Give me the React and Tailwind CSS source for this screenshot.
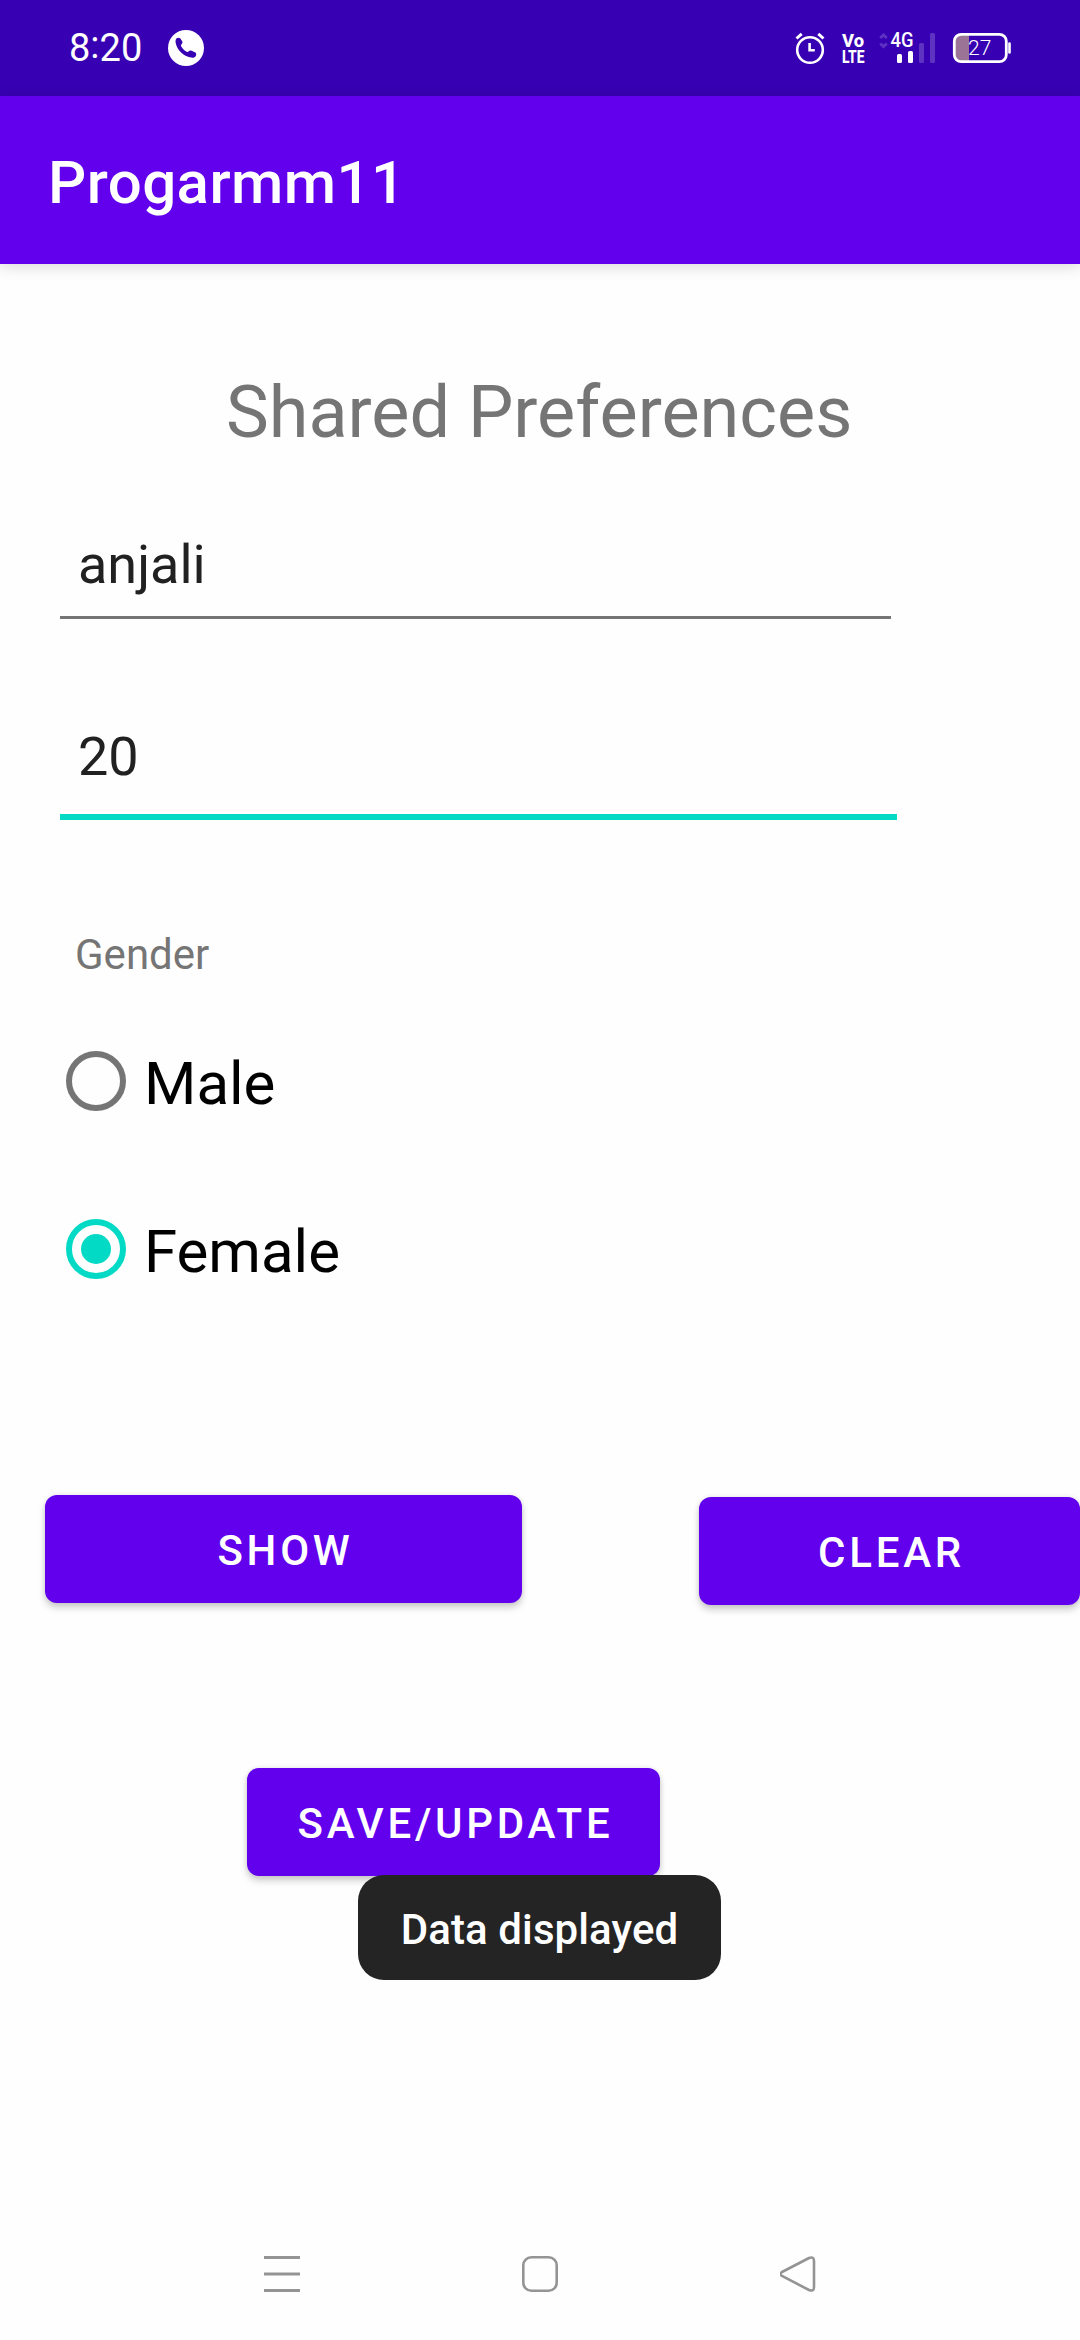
function StatusIcons() {
  return (
    <svg className="h-[96px] w-[240px]" viewBox="780 0 240 96" fill="none">
      {/* alarm clock */}
      <g stroke="#fff">
        <circle cx="810" cy="50" r="12.8" strokeWidth="2.6" />
        <path d="M796.5 38.5l5.2-4.6M823.5 38.5l-5.2-4.6" strokeWidth="3" />
        <path d="M809.6 43v7.3h5.2" strokeWidth="2.6" />
      </g>
      {/* VoLTE */}
      <g fill="#fff" fontFamily="Roboto, sans-serif" fontWeight="800">
        <text x="842" y="46.8" fontSize="18" textLength="22" lengthAdjust="spacingAndGlyphs">Vo</text>
        <text x="842" y="62.5" fontSize="18.5" textLength="22.5" lengthAdjust="spacingAndGlyphs">LTE</text>
      </g>
      {/* data arrows */}
      <path d="M880.2 38l3.300-3 3.300 3M880.200 43.500l3.300 3 3.300-3" stroke="#5f33c2" strokeWidth="2.8" />
      <text x="890.5" y="47" fontSize="19.5" fontWeight="500" fontFamily="Roboto, sans-serif" fill="#fff" textLength="23" lengthAdjust="spacingAndGlyphs">4G</text>
      {/* signal bars */}
      <rect x="897" y="54" width="5" height="9" rx="1.5" fill="#fff" />
      <rect x="908" y="51" width="5" height="12" rx="1.5" fill="#fff" />
      <rect x="919" y="43" width="5" height="20" rx="1.5" fill="#5f33c2" />
      <rect x="930" y="33" width="5" height="30" rx="1.5" fill="#5f33c2" />
      {/* battery */}
      <path d="M969 35h-7a7 7 0 0 0-7 7v12a7 7 0 0 0 7 7h7z" fill="#9b7396" />
      <rect x="954.3" y="34.3" width="52" height="27.4" rx="7" stroke="#fff" strokeWidth="2.8" />
      <path d="M1009.5 43.5v9" stroke="#fff" strokeWidth="2.6" strokeLinecap="round" />
      <text x="968" y="55" fontSize="21" fontFamily="Roboto, sans-serif" fontWeight="350" fill="#fff">27</text>
    </svg>
  );
}

function StatusBar() {
  return (
    <header className="flex h-[96px] items-center bg-[#3700b3] pl-[69px] text-white">
      <span className="w-[99px] text-[38px] leading-[96px]">
        8<span className="relative -top-[3px]">:</span>20
      </span>
      <svg className="h-9 w-9" viewBox="0 0 36 36">
        <circle cx="18" cy="18" r="18" fill="#fff" />
        <path
          d="M8.700 8.300c1-.8 2.900-.9 3.700.2l1.900 3c.5 1-.1 2.100-.9 3-.6.700-.6 1.300-.1 2 1.300 2.200 3 3.900 5.300 5.200.7.400 1.300.3 1.900-.2 1-.9 2-1.100 3-.7l3.400 1.400c1.400.6 1.700 2 .9 3.700-.7 1.500-2.600 2.200-5 1.700C15.400 26 9.300 20.700 7.700 13c-.4-2-.1-3.800 1-4.700z"
          fill="#3700b3"
        />
      </svg>
      <div className="ml-auto flex pr-[60px]">
        <StatusIcons />
      </div>
    </header>
  );
}

function Radio({ label, checked }) {
  return (
    <label className="flex h-[96px] items-center">
      <span
        className={
          checked
            ? "flex size-[60px] items-center justify-center rounded-full border-[6px] border-[#03dac5]"
            : "size-[60px] rounded-full border-[6px] border-[#757575]"
        }
      >
        {checked && <span className="size-[30px] rounded-full bg-[#03dac5]" />}
      </span>
      <span className="pt-[5px] pl-[18px] text-[60px] leading-[70px] text-black">{label}</span>
    </label>
  );
}

function Button({ className, children }) {
  return (
    <button
      className={
        "flex h-[108px] items-center justify-center rounded-[12px] bg-[#6200ee] pt-[3px] pl-[4px] text-[42px] font-medium tracking-[3.75px] text-white shadow-[0_5px_7px_rgba(0,0,0,0.18),0_0_5px_rgba(0,0,0,0.1)] " +
        className
      }
    >
      {children}
    </button>
  );
}

export default function App() {
  return (
    <div className="relative flex h-[2340px] w-[1080px] flex-col overflow-hidden bg-[#fefefe] font-[Roboto,sans-serif]">
      <StatusBar />
      <div className="flex h-[168px] items-center bg-[#6200ee] pt-[5px] pl-[48px] shadow-[0_3px_14px_rgba(0,0,0,0.14)]">
        <h1 className="text-[60px] leading-[70px] font-medium tracking-[0.45px] text-white">Progarmm11</h1>
      </div>

      <main className="flex flex-col">
        <h2 className="mt-[107px] pl-[226px] text-[72px] leading-[84px] text-[#757575]">Shared Preferences</h2>

        <div className="mt-[78px] ml-[60px] h-[86px] w-[831px] border-b-[3px] border-[#757575] pl-[18px] text-[54px] leading-[64px] text-[#212121]">
          anjali
        </div>
        <div className="mt-[106px] ml-[60px] h-[95px] w-[837px] border-b-[6px] border-[#03dac5] pl-[18px] text-[54px] leading-[64px] text-[#212121]">
          20
        </div>

        <p className="mt-[110px] pl-[75px] text-[42px] leading-[50px] text-[#757575]">Gender</p>
        <div className="mt-[53px] flex flex-col gap-[72px] pl-[66px]">
          <Radio label="Male" />
          <Radio label="Female" checked />
        </div>

        <div className="mt-[198px] flex items-start justify-between pl-[45px]">
          <Button className="w-[477px]">SHOW</Button>
          <Button className="mt-[2px] w-[381px]">CLEAR</Button>
        </div>
        <Button className="mt-[163px] ml-[247px] w-[413px]">SAVE/UPDATE</Button>
      </main>

      <div className="absolute top-[1875px] left-[358px] flex h-[105px] w-[363px] items-center justify-center rounded-[26px] bg-[#242424] pt-[3px] text-[42px] font-medium tracking-[0.1px] text-white">
        Data displayed
      </div>

      <nav className="mt-auto flex h-[132px] items-center justify-between px-[264px]">
        <svg className="h-9 w-9" viewBox="0 0 36 36" stroke="#949494" strokeWidth="3">
          <path d="M0 1.500h36M0 18h36M0 34.500h36" />
        </svg>
        <svg className="h-9 w-9" viewBox="0 0 36 36" fill="none" stroke="#949494" strokeWidth="2.600">
          <rect x="1.300" y="1.300" width="33.400" height="33.400" rx="8" />
        </svg>
        <svg className="h-9 w-9" viewBox="0 0 36 36" fill="none" stroke="#949494" strokeWidth="2.600">
          <path d="M2 16 29 2Q34 0 34 5V31Q34 36 29 34L2 20Q-1 18 2 16Z" />
        </svg>
      </nav>
    </div>
  );
}
